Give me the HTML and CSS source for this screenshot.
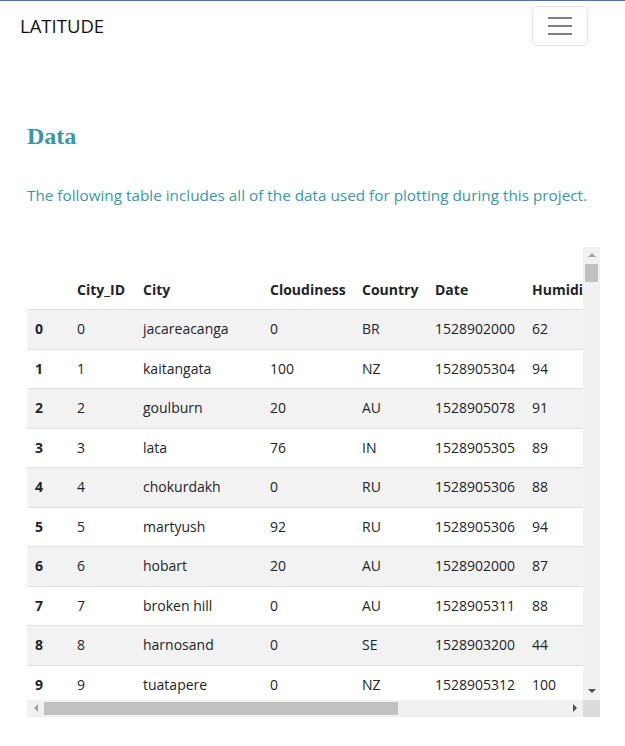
FILE: index.html
```html
<!DOCTYPE html>
<html lang="en">
<head>
<meta charset="utf-8">
<title>Latitude - Data</title>
<link rel="stylesheet" href="styles.css">
</head>
<body>
<nav class="navbar">
  <a class="brand" href="#">LATITUDE</a>
  <button class="toggler" type="button" aria-label="Toggle navigation">
    <span class="bar"></span><span class="bar"></span><span class="bar"></span>
  </button>
</nav>
<main class="content">
  <h2 class="title">Data</h2>
  <p class="lead">The following table includes all of the data used for plotting during this project.</p>
  <div class="table-frame">
    <div class="table-view">
      <table class="data-table">
        <colgroup>
          <col class="c-idx"><col class="c-id"><col class="c-city"><col class="c-cloud"><col class="c-country"><col class="c-date"><col class="c-hum"><col class="c-lat"><col class="c-lng"><col class="c-temp"><col class="c-wind">
        </colgroup>
        <thead>
          <tr><th></th><th>City_ID</th><th>City</th><th>Cloudiness</th><th>Country</th><th>Date</th><th>Humidity</th><th>Lat</th><th>Lng</th><th>Max Temp</th><th>Wind Speed</th></tr>
        </thead>
        <tbody>
          <tr><th>0</th><td>0</td><td>jacareacanga</td><td>0</td><td>BR</td><td>1528902000</td><td>62</td><td>-6.22</td><td>-57.76</td><td>89.60</td><td>6.93</td></tr>
          <tr><th>1</th><td>1</td><td>kaitangata</td><td>100</td><td>NZ</td><td>1528905304</td><td>94</td><td>-46.28</td><td>169.85</td><td>42.61</td><td>5.64</td></tr>
          <tr><th>2</th><td>2</td><td>goulburn</td><td>20</td><td>AU</td><td>1528905078</td><td>91</td><td>-34.75</td><td>149.72</td><td>44.32</td><td>8.99</td></tr>
          <tr><th>3</th><td>3</td><td>lata</td><td>76</td><td>IN</td><td>1528905305</td><td>89</td><td>30.78</td><td>78.62</td><td>59.89</td><td>0.94</td></tr>
          <tr><th>4</th><td>4</td><td>chokurdakh</td><td>0</td><td>RU</td><td>1528905306</td><td>88</td><td>70.62</td><td>147.90</td><td>32.17</td><td>2.95</td></tr>
          <tr><th>5</th><td>5</td><td>martyush</td><td>92</td><td>RU</td><td>1528905306</td><td>94</td><td>56.40</td><td>61.88</td><td>51.14</td><td>5.44</td></tr>
          <tr><th>6</th><td>6</td><td>hobart</td><td>20</td><td>AU</td><td>1528902000</td><td>87</td><td>-42.88</td><td>147.33</td><td>48.20</td><td>4.70</td></tr>
          <tr><th>7</th><td>7</td><td>broken hill</td><td>0</td><td>AU</td><td>1528905311</td><td>88</td><td>-31.97</td><td>141.45</td><td>41.75</td><td>4.83</td></tr>
          <tr><th>8</th><td>8</td><td>harnosand</td><td>0</td><td>SE</td><td>1528903200</td><td>44</td><td>62.63</td><td>17.94</td><td>66.20</td><td>10.29</td></tr>
          <tr><th>9</th><td>9</td><td>tuatapere</td><td>0</td><td>NZ</td><td>1528905312</td><td>100</td><td>-46.13</td><td>167.69</td><td>44.95</td><td>3.74</td></tr>
          <tr><th>10</th><td>10</td><td>bluff</td><td>88</td><td>NZ</td><td>1528905313</td><td>99</td><td>-46.60</td><td>168.33</td><td>44.95</td><td>3.74</td></tr>
        </tbody>
      </table>
    </div>
    <div class="vscroll">
      <div class="sb-btn"><span class="arrow arrow-up"></span></div>
      <div class="sb-track sb-track-v"><div class="thumb thumb-v"></div></div>
      <div class="sb-btn"><span class="arrow arrow-down"></span></div>
    </div>
    <div class="hscroll">
      <div class="sb-btn"><span class="arrow arrow-left"></span></div>
      <div class="sb-track sb-track-h"><div class="thumb thumb-h"></div></div>
      <div class="sb-btn"><span class="arrow arrow-right"></span></div>
    </div>
    <div class="sb-corner"></div>
  </div>
</main>
</body>
</html>
```

FILE: styles.css
```css
html, body {
  margin: 0;
  padding: 0;
  background: #ffffff;
}
body {
  font-family: "Open Sans", "Noto Sans", sans-serif;
  color: #212529;
  border-top: 1px solid #4672b4;
}
.navbar {
  display: flex;
  justify-content: space-between;
  align-items: center;
  padding: 5px 37px 6px 20px;
}
.brand {
  font-size: 18.5px;
  color: #111111;
  text-decoration: none;
  line-height: 28px;
}
.toggler {
  width: 56px;
  height: 40px;
  border: 1px solid #e5e5e5;
  border-radius: 5px;
  background: #ffffff;
  padding: 0;
  display: flex;
  flex-direction: column;
  align-items: center;
  justify-content: center;
  gap: 6px;
}
.bar {
  display: block;
  width: 24px;
  height: 2px;
  background: #7f7f7f;
}
.content {
  padding: 70px 25px 20px 27px;
}
.title {
  margin: 0;
  font-family: "Liberation Serif", "Times New Roman", serif;
  font-weight: bold;
  font-size: 24px;
  line-height: 28.8px;
  color: #3a97a6;
}
.lead {
  margin: 32px 0 0 0;
  font-size: 15.3px;
  line-height: 24px;
  color: #3a97a6;
}

/* table frame with its scrollbars */
.table-frame {
  margin-top: 40px;
  width: 573px;
  display: grid;
  grid-template-columns: 556px 17px;
  grid-template-rows: 453px 17px;
}
.table-view {
  overflow: hidden;
}
.vscroll {
  display: flex;
  flex-direction: column;
  background: #f1f1f1;
}
.hscroll {
  display: flex;
  flex-direction: row;
  background: #f1f1f1;
}
.sb-btn {
  width: 17px;
  height: 17px;
  flex: none;
  display: flex;
  align-items: center;
  justify-content: center;
}
.sb-track {
  flex: 1;
  display: flex;
}
.sb-track-v {
  flex-direction: column;
}
.thumb {
  background: #c1c1c1;
}
.thumb-v {
  height: 18px;
  margin: 0 2px;
}
.thumb-h {
  width: 354px;
  margin: 2px 0;
}
.sb-corner {
  background: #dcdcdc;
}
.arrow {
  display: block;
  width: 0;
  height: 0;
}
.arrow-up {
  border-left: 4px solid transparent;
  border-right: 4px solid transparent;
  border-bottom: 4px solid #a3a3a3;
}
.arrow-down {
  border-left: 4px solid transparent;
  border-right: 4px solid transparent;
  border-top: 4px solid #505050;
}
.arrow-left {
  border-top: 4px solid transparent;
  border-bottom: 4px solid transparent;
  border-right: 4px solid #a3a3a3;
}
.arrow-right {
  border-top: 4px solid transparent;
  border-bottom: 4px solid transparent;
  border-left: 4px solid #505050;
}

.data-table {
  margin-top: 24px;
  width: 820px;
  table-layout: fixed;
  border-collapse: collapse;
  font-size: 14px;
  line-height: 22.5px;
}
.c-idx { width: 42px; }
.c-id { width: 66px; }
.c-city { width: 127px; }
.c-cloud { width: 92px; }
.c-country { width: 73px; }
.c-date { width: 97px; }
.c-hum { width: 80px; }
.c-lat { width: 58px; }
.c-lng { width: 60px; }
.c-temp { width: 60px; }
.c-wind { width: 65px; }
.data-table th,
.data-table td {
  padding: 8px;
  text-align: left;
  vertical-align: top;
  white-space: nowrap;
}
.data-table thead th {
  font-weight: bold;
  border-bottom: 1.5px solid #dee2e6;
}
.data-table tbody th {
  font-weight: bold;
}
.data-table tbody tr + tr th,
.data-table tbody tr + tr td {
  border-top: 1px solid #dee2e6;
}
.data-table tbody tr:nth-child(odd) {
  background: #f2f2f2;
}
```
